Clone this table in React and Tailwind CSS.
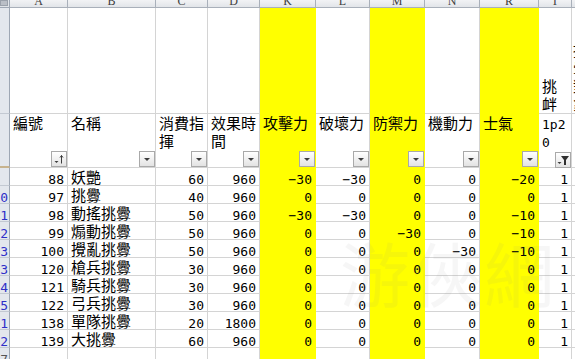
import React from 'react';

const CJK = "font-['Noto_Sans_CJK_TC',sans-serif]";
const NUM = "font-['DejaVu_Sans_Mono',monospace]";

const COLS = [
    { id: 'A', w: 'w-[58px]' },
    { id: 'B', w: 'w-[88px]' },
    { id: 'C', w: 'w-[52px]' },
    { id: 'D', w: 'w-[52px]' },
    { id: 'K', w: 'w-[56px]', y: true },
    { id: 'L', w: 'w-[54px]' },
    { id: 'M', w: 'w-[55px]', y: true },
    { id: 'N', w: 'w-[55px]' },
    { id: 'R', w: 'w-[59px]', y: true },
    { id: 'T', w: 'w-[33px]' },
    { id: 'U', w: 'w-[40px]' },
];

const LABELS = {
    A: { lines: ['編號'], btn: 'sort' },
    B: { lines: ['名稱'] },
    C: { lines: ['消費指', '揮'] },
    D: { lines: ['效果時', '間'] },
    K: { lines: ['攻擊力'] },
    L: { lines: ['破壞力'] },
    M: { lines: ['防禦力'] },
    N: { lines: ['機動力'] },
    R: { lines: ['士氣'] },
    T: { lines: ['1p2', '0'], mono: true, btn: 'funnel' },
    U: { lines: ['1p2', '1'], mono: true, btn: 'none' },
};

const ROWS = [
    ['', 88, '妖艷', 60, 960, -30, -30, 0, 0, -20, 1],
    ['10', 97, '挑釁', 40, 960, 0, 0, 0, 0, 0, 1],
    ['11', 98, '動搖挑釁', 50, 960, -30, -30, 0, 0, -10, 1],
    ['12', 99, '煽動挑釁', 50, 960, 0, 0, -30, 0, -10, 1],
    ['13', 100, '攪亂挑釁', 50, 960, 0, 0, 0, -30, -10, 1],
    ['23', 120, '槍兵挑釁', 30, 960, 0, 0, 0, 0, 0, 1],
    ['24', 121, '騎兵挑釁', 30, 960, 0, 0, 0, 0, 0, 1],
    ['25', 122, '弓兵挑釁', 30, 960, 0, 0, 0, 0, 0, 1],
    ['31', 138, '單隊挑釁', 20, 1800, 0, 0, 0, 0, 0, 1],
    ['32', 139, '大挑釁', 60, 960, 0, 0, 0, 0, 0, 1],
];

const fmt = (n) => (n < 0 ? '\u2212' + Math.abs(n) : String(n));

const cellClass = (col) =>
    `${col.w} shrink-0 border-r border-b ${col.y ? 'bg-[#ffff00] border-[#ffff00]' : 'border-[#d4d4d4]'}`;

const FilterButton = ({ kind }) => (
    <div className="w-[16px] h-[16px] shrink-0 self-end mt-auto border border-[#a9a9a9] bg-gradient-to-b from-white to-[#e3e3e3]">
        <svg width="14" height="14" viewBox="0 0 14 14">
            {kind === 'sort' && (
                <>
                    <polygon points="2.5,9 6.5,9 4.5,11" fill="#3c3c3c" />
                    <path d="M9.5 3.5V11.5" stroke="#3c3c3c" strokeWidth="1" />
                    <path d="M8 5.5L9.5 3.5L11 5.5" stroke="#3c3c3c" strokeWidth="1" fill="none" />
                </>
            )}
            {kind === 'funnel' && (
                <>
                    <polygon points="5,3 13,3 10,7 10,12 8,12 8,7" fill="#2f2f2f" />
                    <polygon points="1.5,9 5.5,9 3.5,11" fill="#3c3c3c" />
                </>
            )}
            {kind === 'plain' && <polygon points="4,6 10,6 7,9" fill="#3c3c3c" />}
        </svg>
    </div>
);

// only the right edge of the row-number gutter is in view, so the numbers are clipped
const RowHead = ({ n, className = '', gray }) => (
    <div className={`w-[10px] shrink-0 bg-[#e3e7ed] border-r border-[#9ea7b4] overflow-hidden flex items-end ${className}`}>
        <div className={`w-[24px] shrink-0 -ml-[15px] text-right pr-[1px] whitespace-nowrap text-[13px] leading-[11px] ${NUM} ${gray ? 'text-[#555]' : 'text-[#2f2fc8]'}`}>
            {n}
        </div>
    </div>
);

export default function App() {
    return (
        <div className="relative w-[575px] h-[359px] overflow-hidden bg-white text-black">
            {/* column letters */}
            <div className="flex h-[8px]">
                <div className="w-[10px] shrink-0 bg-[#dfe3e8] border-r border-b border-[#9ea7b4] flex items-start">
                    <div className="w-[8px] h-[6px] bg-[#b9bec6] border border-[#9aa1ab]" />
                </div>
                {COLS.map((c) => (
                    <div
                        key={c.id}
                        className={`${c.w} shrink-0 overflow-hidden bg-gradient-to-b from-[#f2f3f5] to-[#e2e5e9] border-r border-b border-[#a9b0ba] flex items-end justify-center text-[12px] leading-[12px] text-[#3d3d3d] font-['Liberation_Serif',serif]`}
                    >
                        {c.id}
                    </div>
                ))}
            </div>

            {/* row 1: tall blank row */}
            <div className="flex h-[106px]">
                <RowHead n="" className="border-b border-b-[#c3c9d2]" />
                {COLS.map((c) => (
                    <div key={c.id} className={`${cellClass(c)} flex flex-col justify-end pl-[3px] text-[15px] leading-[18px] ${CJK}`}>
                        {c.id === 'T' && (
                            <>
                                <span>挑</span>
                                <span>衅</span>
                            </>
                        )}
                        {c.id === 'U' && (
                            <>
                                <span className="-ml-[2px]">挑</span>
                                <span className="-ml-[2px]">釁</span>
                                <span className="-ml-[2px]">對</span>
                                <span className="-ml-[2px]">象</span>
                            </>
                        )}
                    </div>
                ))}
            </div>

            {/* row 2: header labels with filter buttons */}
            <div className="flex h-[54px]">
                <RowHead n="" className="border-b-2 border-b-[#c7b38e]" />
                {COLS.map((c) => {
                    const l = LABELS[c.id];
                    return (
                        <div key={c.id} className={`${cellClass(c)} flex flex-col`}>
                            <div className={`pl-[3px] ${l.mono ? `${NUM} text-[13px] leading-[18px] pt-[2px]` : `${CJK} text-[15px] leading-[18px]`}`}>
                                {l.lines.map((t, i) => (
                                    <div key={i} className="whitespace-nowrap">{t}</div>
                                ))}
                            </div>
                            {l.btn !== 'none' && <FilterButton kind={l.btn || 'plain'} />}
                        </div>
                    );
                })}
            </div>

            {/* data rows */}
            {ROWS.map((r) => {
                const [rn, id, name, cost, dur, ...vals] = r;
                const nums = [id, null, cost, dur, ...vals];
                return (
                    <div key={id} className="flex h-[18px]">
                        <RowHead n={rn} className="border-b border-b-[#c3c9d2]" />
                        {COLS.map((c, i) => {
                            if (c.id === 'B') {
                                return (
                                    <div key={c.id} className={`${cellClass(c)} flex items-end pl-[3px] text-[15px] leading-[17px] whitespace-nowrap ${CJK}`}>
                                        {name}
                                    </div>
                                );
                            }
                            if (c.id === 'U') {
                                return <div key={c.id} className={cellClass(c)} />;
                            }
                            return (
                                <div key={c.id} className={`${cellClass(c)} flex items-end justify-end pr-[3px] text-[13px] leading-[11px] ${NUM}`}>
                                    {fmt(nums[i])}
                                </div>
                            );
                        })}
                    </div>
                );
            })}

            {/* partial last row */}
            <div className="flex h-[18px]">
                <RowHead n="37" gray className="border-b border-b-[#c3c9d2]" />
                {COLS.map((c) => (
                    <div key={c.id} className={cellClass(c)} />
                ))}
            </div>

            {/* watermark */}
            <div className={`pointer-events-none absolute left-[340px] top-[222px] text-[70px] leading-[100px] tracking-[2px] text-[#8a8a8a] opacity-[0.07] ${CJK}`}>
                游俠網
            </div>
        </div>
    );
}
